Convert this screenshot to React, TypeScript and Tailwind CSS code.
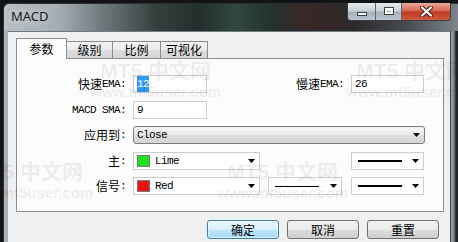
import React from 'react';

const cjk = "font-['Noto_Sans_CJK_SC',sans-serif]";
const mono = "font-['Liberation_Mono','Noto_Sans_CJK_SC',monospace]";

function Arrow() {
  return (
    <svg width="7" height="4" viewBox="0 0 7 4" className="shrink-0">
      <path d="M0 0H7L3.5 4Z" fill="#000" />
    </svg>
  );
}

function Label({ cn, en, w }: { cn?: string; en?: string; w: string }) {
  return (
    <div className={`${w} shrink-0 flex justify-end items-center whitespace-nowrap text-black`}>
      {cn && <span className={`text-[12px] leading-[14px] ${cjk}`}>{cn}</span>}
      {en && <span className={`text-[11px] leading-[14px] tracking-[-0.6px] ${mono}`}>{en}</span>}
    </div>
  );
}

function TextBox({ w, children }: { w: string; children: React.ReactNode }) {
  return (
    <div className={`${w} ml-[7px] h-[18px] shrink-0 flex items-center pl-[3px] bg-white border border-[#cdcdcd] text-[11px] tracking-[-0.6px] text-black ${mono}`}>
      {children}
    </div>
  );
}

function ColorCombo({ color, name }: { color: string; name: string }) {
  return (
    <div className="w-[127px] ml-[7px] h-[18px] shrink-0 flex items-center pl-[3px] pr-[4px] bg-white border border-[#cdcdcd]">
      <span className={`w-[13px] h-[12px] border border-[#7a7a7a] ${color}`} />
      <span className={`ml-[5px] text-[11px] tracking-[-0.6px] text-black ${mono}`}>{name}</span>
      <span className="ml-auto">
        <Arrow />
      </span>
    </div>
  );
}

function LineCombo({ w, ml, thick }: { w: string; ml: string; thick?: boolean }) {
  return (
    <div className={`${w} ${ml} h-[18px] shrink-0 flex items-center pl-[6px] pr-[4px] bg-white border border-[#cdcdcd]`}>
      <span className={`w-[44px] bg-black ${thick ? 'h-[2px]' : 'h-px'}`} />
      <span className="ml-auto">
        <Arrow />
      </span>
    </div>
  );
}

function Watermark({ pos }: { pos: string }) {
  return (
    <div className={`pointer-events-none absolute flex flex-col items-center text-[rgba(0,0,0,0.08)] ${pos}`}>
      <span className="text-[21px] leading-[22px] font-bold whitespace-nowrap font-['Liberation_Sans','Noto_Sans_CJK_SC',sans-serif]">
        MT5 中文网
      </span>
      <span className="mt-[2px] text-[15px] leading-[15px] font-bold whitespace-nowrap font-['Liberation_Sans',sans-serif]">
        www.mt5user.com
      </span>
    </div>
  );
}

const tabs = [
  { label: '参数', w: 'w-[51px]' },
  { label: '级别', w: 'w-[47px]' },
  { label: '比例', w: 'w-[49px]' },
  { label: '可视化', w: 'w-[48px]' },
];

export default function App() {
  return (
    <div className="relative w-[458px] h-[242px] overflow-hidden bg-[#111314]">
      <div className="ml-[3px] mt-[3px] w-[455px] h-[239px] flex flex-col rounded-tl-[6px] border-l border-t border-[#2e3337] bg-[linear-gradient(90deg,#b9c0c5_0%,#a5adb2_12%,#6e777b_22%,#36413f_33%,#222f2c_43%,#30493f_51%,#25312d_59%,#3a2727_67%,#2c292a_77%,#484d52_89%,#7c848a_100%)]">
        {/* title bar */}
        <div className="h-[27px] shrink-0 flex items-start">
          <span className="pl-[7px] pt-[6px] text-[13px] leading-[13px] text-[#151515] font-['Noto_Sans',sans-serif] [text-shadow:0_0_6px_rgba(255,255,255,0.7)]">
            MACD
          </span>
          <div className="ml-auto mr-[7px] -mt-px flex h-[18px] rounded-b-[4px] border border-t-0 border-[#3a4047] overflow-hidden">
            <div className="w-[28px] flex items-end justify-center pb-[4px] border-r border-[#5d666f] bg-[linear-gradient(180deg,#e6ebf0_0%,#c9d0d7_45%,#a7b1bb_55%,#bcc5ce_100%)]">
              <span className="w-[10px] h-[4px] bg-white border border-[#3b434b]" />
            </div>
            <div className="w-[26px] flex items-start justify-center pt-[4px] border-r border-[#5d666f] bg-[linear-gradient(180deg,#e6ebf0_0%,#c9d0d7_45%,#a7b1bb_55%,#bcc5ce_100%)]">
              <span className="w-[10px] h-[8px] border border-[#3b434b] bg-white p-[2px] pt-[3px]">
                <span className="block w-full h-full bg-[#8e99a4]" />
              </span>
            </div>
            <div className="w-[48px] flex items-center justify-center bg-[linear-gradient(180deg,#eaa898_0%,#d8725c_40%,#c23a22_55%,#cf5a3e_100%)]">
              <svg width="13" height="11" viewBox="0 0 13 11">
                <path d="M2 1.5L11 9.5M11 1.5L2 9.5" stroke="#4a1a12" strokeWidth="4" strokeLinecap="round" />
                <path d="M2 1.5L11 9.5M11 1.5L2 9.5" stroke="#ffffff" strokeWidth="2.2" strokeLinecap="round" />
              </svg>
            </div>
          </div>
        </div>

        {/* body */}
        <div className="flex flex-1 min-h-0">
          <div className="w-[4px] shrink-0 bg-[#aab1b6]" />
          <div className="w-[442px] shrink-0 border-t border-[#6f7a83] bg-[#f0f0f0] pl-[8px] pt-[6px]">
            {/* tabs */}
            <div className="relative z-10 flex items-end h-[20px]">
              {tabs.map((t, i) =>
                i === 0 ? (
                  <div
                    key={t.label}
                    className={`${t.w} h-[21px] -mb-px flex items-center justify-center bg-[#fcfcfc] border border-b-0 border-[#898c95] text-[12px] text-black ${cjk}`}
                  >
                    {t.label}
                  </div>
                ) : (
                  <div
                    key={t.label}
                    className={`${t.w} h-[17px] -ml-px flex items-center justify-center bg-[linear-gradient(180deg,#f3f3f3_0%,#ebebeb_50%,#dddddd_51%,#d6d6d6_100%)] border border-b-0 border-[#898c95] text-[12px] text-black ${cjk}`}
                  >
                    {t.label}
                  </div>
                ),
              )}
            </div>

            {/* panel */}
            <div className="w-[428px] h-[154px] border border-[#898c95] bg-[#fcfcfc] flex flex-col pt-[16px]">
              <div className="flex items-center h-[18px]">
                <Label cn="快速" en="EMA:" w="w-[109px]" />
                <TextBox w="w-[74px]">
                  <span className="bg-[#3399ff] text-white">12</span>
                </TextBox>
                <Label cn="慢速" en="EMA:" w="w-[137px]" />
                <TextBox w="w-[73px]">26</TextBox>
              </div>
              <div className="flex items-center h-[18px] mt-[8px]">
                <Label en="MACD SMA:" w="w-[109px]" />
                <TextBox w="w-[74px]">9</TextBox>
              </div>
              <div className="flex items-center h-[18px] mt-[7px]">
                <Label cn="应用到" en=":" w="w-[109px]" />
                <div className="w-[292px] ml-[7px] h-[18px] flex items-center pl-[3px] pr-[4px] rounded-[3px] border border-[#7b7b7b] bg-[linear-gradient(180deg,#f4f4f4_0%,#ececec_50%,#dedede_51%,#d4d4d4_100%)]">
                  <span className={`text-[11px] tracking-[-0.6px] text-black ${mono}`}>Close</span>
                  <span className="ml-auto">
                    <Arrow />
                  </span>
                </div>
              </div>
              <div className="flex items-center h-[18px] mt-[8px]">
                <Label cn="主" en=":" w="w-[109px]" />
                <ColorCombo color="bg-[#1ee21e]" name="Lime" />
                <LineCombo w="w-[73px]" ml="ml-[91px]" thick />
              </div>
              <div className="flex items-center h-[18px] mt-[7px]">
                <Label cn="信号" en=":" w="w-[109px]" />
                <ColorCombo color="bg-[#ee1111]" name="Red" />
                <LineCombo w="w-[74px]" ml="ml-[8px]" />
                <LineCombo w="w-[73px]" ml="ml-[9px]" thick />
              </div>
            </div>

            {/* buttons */}
            <div className="flex justify-end gap-[8px] pr-[11px] mt-[8px]">
              <button className={`w-[72px] h-[19px] rounded-[3px] border border-[#3c7fb1] bg-[linear-gradient(180deg,#eaf6fd_0%,#d9f0fc_50%,#bee6fd_51%,#a7d9f5_100%)] shadow-[inset_0_0_0_1px_rgba(255,255,255,0.6)] text-[12px] leading-[17px] text-black ${cjk}`}>
                确定
              </button>
              <button className={`w-[72px] h-[19px] rounded-[3px] border border-[#707070] bg-[linear-gradient(180deg,#f2f2f2_0%,#ebebeb_50%,#dddddd_51%,#cfcfcf_100%)] text-[12px] leading-[17px] text-black ${cjk}`}>
                取消
              </button>
              <button className={`w-[72px] h-[19px] rounded-[3px] border border-[#707070] bg-[linear-gradient(180deg,#f2f2f2_0%,#ebebeb_50%,#dddddd_51%,#cfcfcf_100%)] text-[12px] leading-[17px] text-black ${cjk}`}>
                重置
              </button>
            </div>
          </div>
          <div className="w-[8px] shrink-0 border-l border-[#3d4247] bg-[linear-gradient(90deg,#a3aaaf_0%,#7d8489_40%,#2a2d30_70%,#1a1c1e_100%)]" />
        </div>
      </div>

      <Watermark pos="left-[90px] top-[60px]" />
      <Watermark pos="left-[346px] top-[60px]" />
      <Watermark pos="left-[-38px] top-[161px]" />
      <Watermark pos="left-[217px] top-[161px]" />
    </div>
  );
}
